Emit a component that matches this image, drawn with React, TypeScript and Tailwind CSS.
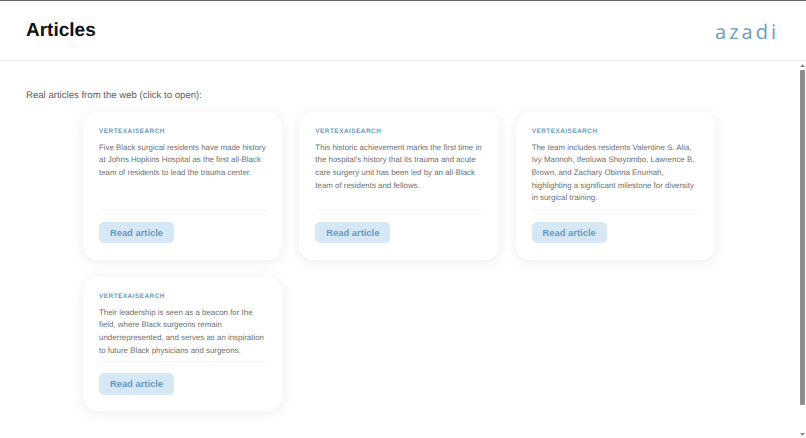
const articles = [
  "Five Black surgical residents have made history at Johns Hopkins Hospital as the first all-Black team of residents to lead the trauma center.",
  "This historic achievement marks the first time in the hospital's history that its trauma and acute care surgery unit has been led by an all-Black team of residents and fellows.",
  "The team includes residents Valentine S. Alia, Ivy Mannoh, Ifeoluwa Shoyombo, Lawrence B. Brown, and Zachary Obinna Enumah, highlighting a significant milestone for diversity in surgical training.",
  "Their leadership is seen as a beacon for the field, where Black surgeons remain underrepresented, and serves as an inspiration to future Black physicians and surgeons.",
];

function Card({ text }: { text: string }) {
  return (
    <div className="flex flex-col rounded-[14px] bg-white px-4 pt-[14.5px] pb-4 shadow-[0_2px_14px_rgba(0,0,0,0.07)]">
      <div className="text-[6.4px] leading-[10px] font-bold tracking-[0.5px] text-[#6a9cc0]">VERTEXAISEARCH</div>
      <p className="mt-[5px] flex-1 text-[7.9px] leading-[12.7px] text-[#707070]">{text}</p>
      <div className="border-t border-[#f5f5f5] pt-[9px]">
        <button className="h-[21.5px] w-[75px] rounded-[5px] bg-[#d6e8f6] text-[9.4px] font-bold text-[#659bc2]">Read article</button>
      </div>
    </div>
  );
}

export default function App() {
  return (
    <div className="flex h-[438px] w-[806px] flex-col overflow-hidden border-t border-[#666666] bg-white font-['Liberation_Sans',Arial,sans-serif] [text-rendering:geometricPrecision]">
      <header className="flex h-[60px] shrink-0 items-center justify-between border-b border-[#eeeeee] pr-[27px] pl-[26px]">
        <h1 className="mt-[1px] text-[19px] font-bold text-[#111111]">Articles</h1>
        <div className="mt-[2px] font-['Open_Sans',sans-serif] text-[20px] font-medium tracking-[3px] text-[#6a9cc0]">azadi</div>
      </header>
      <div className="flex min-h-0 flex-1">
        <main className="flex-1 pt-[28px]">
          <p className="pl-[26px] text-[9.6px] leading-[14px] text-[#5e5e5e]">Real articles from the web (click to open):</p>
          <div className="mt-[9px] ml-[83px] grid w-[632px] grid-cols-3 grid-rows-[147.5px_134px] gap-x-[17px] gap-y-[17.5px]">
            {articles.map((t, i) => (
              <Card key={i} text={t} />
            ))}
          </div>
        </main>
        <div className="flex w-[7px] shrink-0 flex-col items-center pt-[2px] pb-[1px]">
          <svg width="7" height="5" viewBox="0 0 7 5" className="shrink-0"><path d="M3.5 1 6 4H1z" fill="#888888" /></svg>
          <div className="mt-[2px] h-[335px] w-[5px] shrink-0 rounded-[1px] bg-[#8e8e8e]" />
          <div className="flex-1" />
          <svg width="7" height="5" viewBox="0 0 7 5" className="shrink-0"><path d="M1 1h5L3.5 4z" fill="#888888" /></svg>
        </div>
      </div>
    </div>
  );
}
